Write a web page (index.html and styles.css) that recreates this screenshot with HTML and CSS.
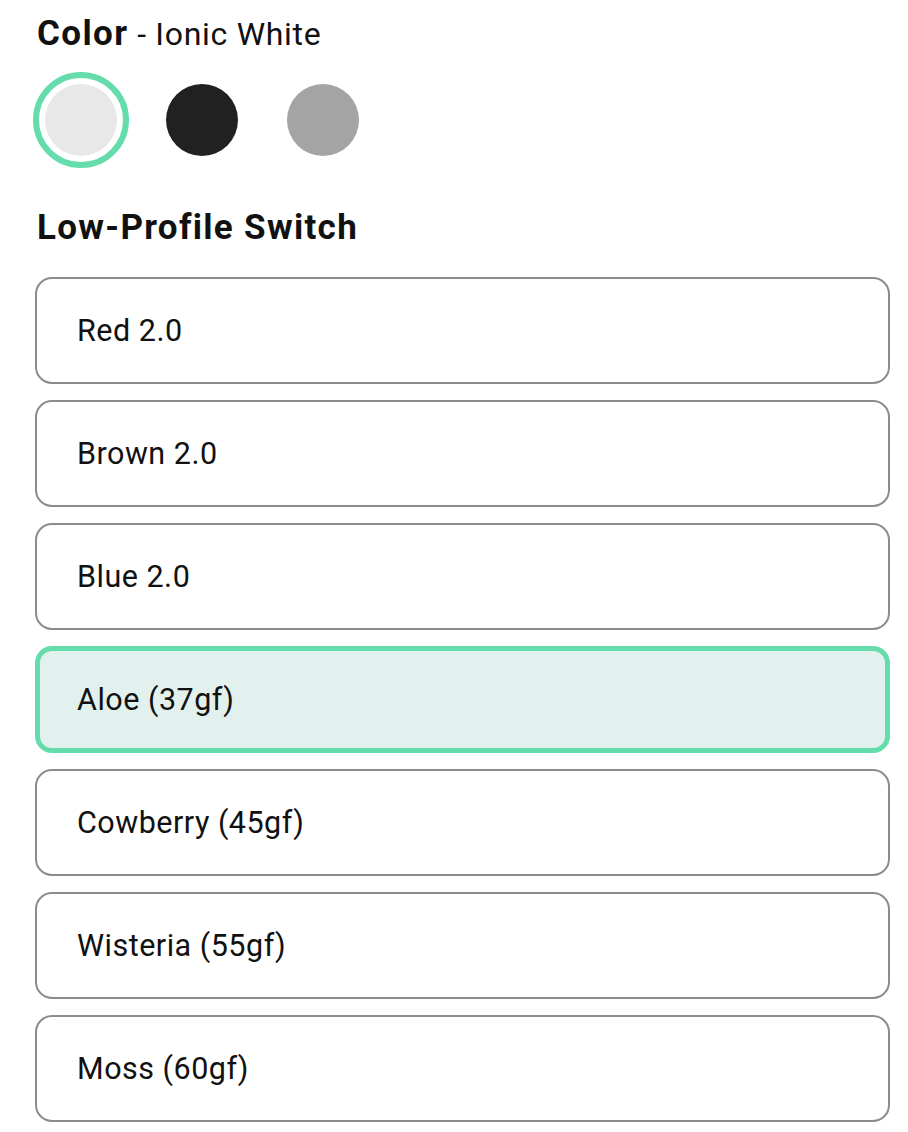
FILE: index.html
```html
<!DOCTYPE html>
<html lang="en">
<head>
<meta charset="utf-8">
<title>Product options</title>
<link rel="stylesheet" href="styles.css">
</head>
<body>
<main class="options">
  <h2 class="title"><strong>Color</strong> <span class="title-value">- Ionic White</span></h2>
  <div class="swatches">
    <button class="swatch is-selected" aria-label="Ionic White"><span class="dot dot-white"></span></button>
    <button class="swatch" aria-label="Black"><span class="dot dot-black"></span></button>
    <button class="swatch" aria-label="Gray"><span class="dot dot-gray"></span></button>
  </div>
  <h2 class="heading">Low-Profile Switch</h2>
  <div class="choices">
    <button class="choice">Red 2.0</button>
    <button class="choice">Brown 2.0</button>
    <button class="choice">Blue 2.0</button>
    <button class="choice is-selected">Aloe (37gf)</button>
    <button class="choice">Cowberry (45gf)</button>
    <button class="choice">Wisteria (55gf)</button>
    <button class="choice">Moss (60gf)</button>
  </div>
</main>
</body>
</html>
```

FILE: styles.css
```css
* { box-sizing: border-box; }
html, body { margin: 0; background: #fff; }
body {
  font-family: Roboto, "Noto Sans", "Liberation Sans", sans-serif;
  color: #111;
}
.options {
  display: flex;
  flex-direction: column;
  padding: 14px 18px 0 35px;
}
.title {
  margin: 0;
  font-size: 35px;
  line-height: 40px;
  font-weight: 400;
  padding-left: 2px;
}
.title strong {
  font-weight: 700;
  letter-spacing: 1.4px;
}
.title-value {
  font-size: 32px;
  letter-spacing: 0.7px;
}
.swatches {
  display: flex;
  gap: 25px;
  margin: 18px 0 0 -2px;
}
.swatch {
  width: 96px;
  height: 96px;
  padding: 0;
  border: 6px solid transparent;
  border-radius: 50%;
  background: transparent;
  display: flex;
  align-items: center;
  justify-content: center;
}
.swatch.is-selected { border-color: #64dcac; }
.dot {
  width: 72px;
  height: 72px;
  border-radius: 50%;
  display: block;
}
.dot-white { background: #e8e8e8; }
.dot-black { background: #212121; }
.dot-gray { background: #a4a4a4; }
.heading {
  margin: 40px 0 0;
  font-size: 35px;
  line-height: 40px;
  font-weight: 700;
  letter-spacing: 1.3px;
  padding-left: 2px;
}
.choices {
  display: flex;
  flex-direction: column;
  gap: 16px;
  margin-top: 29px;
}
.choice {
  height: 107px;
  border: 2px solid #8c8c8c;
  border-radius: 17px;
  background: #fff;
  padding: 0 0 0 40px;
  text-align: left;
  font-family: inherit;
  font-size: 30.5px;
  color: #111;
  letter-spacing: 0.5px;
}
.choice.is-selected {
  border: 5px solid #64dcac;
  background: #e2f1ed;
  padding-left: 37px;
}
```
